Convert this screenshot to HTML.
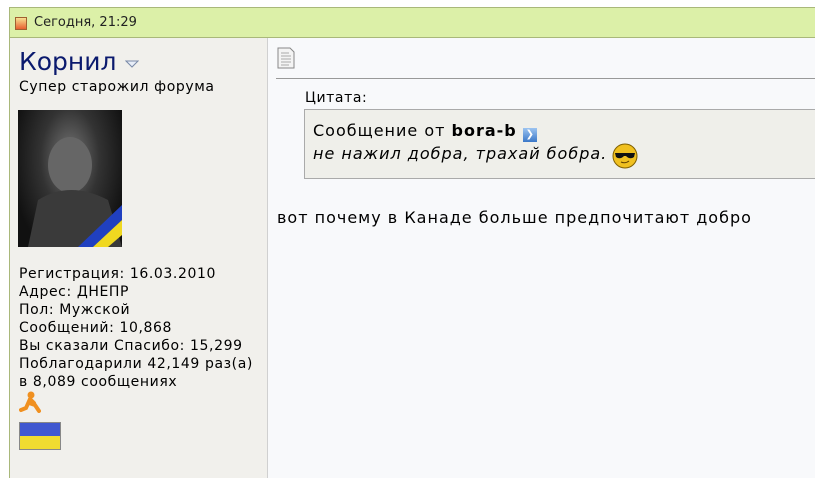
<!DOCTYPE html>
<html><head><meta charset="utf-8"><style>
*{margin:0;padding:0;box-sizing:border-box}
body{width:815px;height:470px;background:#fff;font-family:"DejaVu Sans","Liberation Sans",sans-serif;font-size:13px;color:#000;position:relative;overflow:hidden}
.hdr{position:absolute;left:9px;top:7px;width:820px;height:31px;background:#dcf0a8;border:1px solid #a9b87a;border-right:none}
.hdr span{position:absolute;left:24px;top:7px;font-size:13px;color:#222}
.ic{position:absolute;left:5px;top:9px;width:12px;height:13px;border:1px solid #a06030;background:linear-gradient(#f8e090,#e86030)}
.left{position:absolute;left:9px;top:38px;width:259px;height:440px;background:#f1f0ec;border-left:1px solid #a9b87a;border-right:1px solid #d0d0d0}
.right{position:absolute;left:268px;top:38px;width:560px;height:440px;background:#f8f9fb}
.name{position:absolute;left:19px;top:47px;font-size:25px;color:#0b1a6e}
.tri{display:inline-block;width:14px;height:8px;margin-left:8px;vertical-align:2px}
.title{position:absolute;left:19px;top:79px;font-size:14px;letter-spacing:0.6px}
.av{position:absolute;left:18px;top:110px;width:104px;height:137px;background:radial-gradient(ellipse at 50% 35%,#777 0%,#333 40%,#111 80%);overflow:hidden}
.info{position:absolute;left:19px;top:265px;line-height:18px;font-size:14px;letter-spacing:0.6px}
.q{font-size:16px;letter-spacing:1px}
</style></head><body>
<div class="hdr"><div class="ic"></div><span>Сегодня, 21:29</span></div>
<div class="left"></div>
<div class="right"></div>
<div class="name">Корнил<svg class="tri" viewBox="0 0 14 8"><path d="M1 1H13L7 7Z" fill="#e8eef8" stroke="#7a8aa8"/></svg></div>
<div class="title">Супер старожил форума</div>
<div class="av"><svg width="104" height="137"><ellipse cx="52" cy="55" rx="22" ry="28" fill="#666"/><path d="M10 137 L20 90 Q52 70 90 90 L104 137Z" fill="#3a3a3a"/><path d="M60 137 L104 95 L104 110 L75 137Z" fill="#2040c0"/><path d="M75 137 L104 110 L104 125 L90 137Z" fill="#f0d820"/></svg></div>
<div class="info">Регистрация: 16.03.2010<br>Адрес: ДНЕПР<br>Пол: Мужской<br>Сообщений: 10,868<br>Вы сказали Спасибо: 15,299<br>Поблагодарили 42,149 раз(а)<br>в 8,089 сообщениях</div>
<svg style="position:absolute;left:19px;top:391px" width="22" height="22" viewBox="0 0 22 22"><circle cx="12" cy="4" r="3.5" fill="#f09020"/><path d="M11 8 L7 17 L2 19 M10 12 L16 14 L20 20 M11 8 L15 12" stroke="#f09020" stroke-width="4" fill="none" stroke-linecap="round"/></svg>
<div style="position:absolute;left:19px;top:422px;width:42px;height:28px;border:1px solid #888;background:linear-gradient(#4058d0 50%,#f0dc30 50%)"></div>
<svg style="position:absolute;left:277px;top:47px" width="18" height="22"><path d="M1 1H13L17 5V21H1Z" fill="#f4f4f4" stroke="#888"/><path d="M4 6H12M4 9H14M4 12H14M4 15H14M4 18H12" stroke="#aaa"/></svg>
<div style="position:absolute;left:276px;top:78px;width:540px;height:1px;background:#999"></div>
<div style="position:absolute;left:305px;top:90px;font-size:14px;letter-spacing:0.6px">Цитата:</div>
<div style="position:absolute;left:304px;top:109px;width:520px;height:70px;background:#efefea;border:1px solid #aaa;border-right:none"></div>
<div class="q" style="position:absolute;left:313px;top:121px">Сообщение от <b>bora-b</b> <span style="display:inline-block;width:14px;height:14px;background:linear-gradient(#9cc4f0,#3a78c8);color:#fff;font-size:10px;line-height:14px;text-align:center;vertical-align:-1px;letter-spacing:0">❯</span></div>
<div class="q" style="position:absolute;left:313px;top:144px;font-style:italic">не нажил добра, трахай бобра.</div>
<svg style="position:absolute;left:612px;top:143px" width="26" height="26"><circle cx="13" cy="13" r="12" fill="#f0c020" stroke="#806000"/><path d="M3 10H23L22 14Q18 17 14 13H12Q8 17 4 14Z" fill="#111"/><path d="M9 19Q13 21 17 18" stroke="#604000" fill="none"/></svg>
<div class="q" style="position:absolute;left:277px;top:208px">вот почему в Канаде больше предпочитают добро</div>
</body></html>
